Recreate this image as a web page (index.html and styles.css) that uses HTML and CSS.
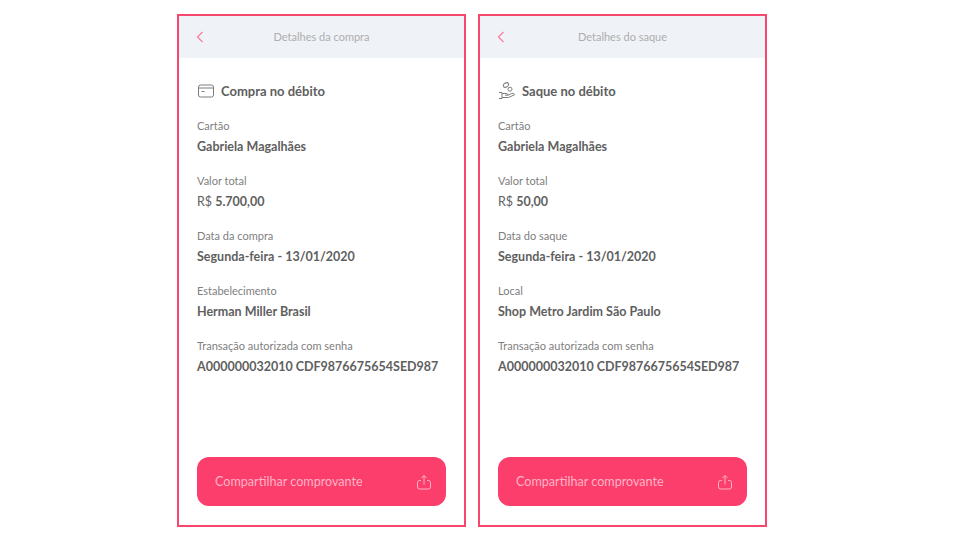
FILE: index.html
```html
<!DOCTYPE html>
<html lang="pt-BR">
<head>
  <meta charset="UTF-8" />
  <title>Detalhes da compra e do saque</title>
  <link rel="stylesheet" href="styles.css">
</head>
<body>
  <div class="screens">
    <section class="phone">
      <header class="top-bar">
        <svg class="back" width="8" height="12" viewBox="0 0 8 12"><path d="M6.5 1 L1.5 6 L6.5 11" /></svg>
        <span class="top-title">Detalhes da compra</span>
      </header>
      <div class="content">
        <div class="kind">
          <svg class="kind-icon" width="18" height="16" viewBox="0 0 18 16">
            <rect x="1.5" y="2" width="15" height="12" rx="2" />
            <path d="M1.5 5 H16.5 M4.5 8.5 H7.5" />
          </svg>
          <span>Compra no débito</span>
        </div>
        <div class="field">
          <div class="label">Cartão</div>
          <div class="value">Gabriela Magalhães</div>
        </div>
        <div class="field">
          <div class="label">Valor total</div>
          <div class="value"><span class="currency">R$</span> 5.700,00</div>
        </div>
        <div class="field">
          <div class="label">Data da compra</div>
          <div class="value">Segunda-feira - 13/01/2020</div>
        </div>
        <div class="field">
          <div class="label">Estabelecimento</div>
          <div class="value">Herman Miller Brasil</div>
        </div>
        <div class="field">
          <div class="label">Transação autorizada com senha</div>
          <div class="value">A000000032010 CDF9876675654SED987</div>
        </div>
      </div>
      <button class="share">
        <span>Compartilhar comprovante</span>
        <svg class="share-icon" width="16" height="16" viewBox="0 0 16 16">
          <path d="M5 6.5 H3.5 Q1.5 6.5 1.5 8.5 V13 Q1.5 15 3.5 15 H12.5 Q14.5 15 14.5 13 V8.5 Q14.5 6.5 12.5 6.5 H11" />
          <path d="M8 10.5 V1.5 M5.5 4 L8 1.5 L10.5 4" />
        </svg>
      </button>
    </section>

    <section class="phone">
      <header class="top-bar">
        <svg class="back" width="8" height="12" viewBox="0 0 8 12"><path d="M6.5 1 L1.5 6 L6.5 11" /></svg>
        <span class="top-title">Detalhes do saque</span>
      </header>
      <div class="content">
        <div class="kind">
          <svg class="kind-icon" width="18" height="18" viewBox="0 0 18 18">
            <ellipse cx="8" cy="3" rx="2.8" ry="2" transform="rotate(-30 8 3)" />
            <circle cx="12" cy="7.2" r="2" />
            <path d="M1 10.5 H4 V16.5 H1 M4 11.5 H8 Q10 11.5 10 13.2 H7 M4 15.5 H10.5 L16.8 12.6 Q15.8 10.6 13.6 11.5 L10 13.2" />
          </svg>
          <span>Saque no débito</span>
        </div>
        <div class="field">
          <div class="label">Cartão</div>
          <div class="value">Gabriela Magalhães</div>
        </div>
        <div class="field">
          <div class="label">Valor total</div>
          <div class="value"><span class="currency">R$</span> 50,00</div>
        </div>
        <div class="field">
          <div class="label">Data do saque</div>
          <div class="value">Segunda-feira - 13/01/2020</div>
        </div>
        <div class="field">
          <div class="label">Local</div>
          <div class="value">Shop Metro Jardim São Paulo</div>
        </div>
        <div class="field">
          <div class="label">Transação autorizada com senha</div>
          <div class="value">A000000032010 CDF9876675654SED987</div>
        </div>
      </div>
      <button class="share">
        <span>Compartilhar comprovante</span>
        <svg class="share-icon" width="16" height="16" viewBox="0 0 16 16">
          <path d="M5 6.5 H3.5 Q1.5 6.5 1.5 8.5 V13 Q1.5 15 3.5 15 H12.5 Q14.5 15 14.5 13 V8.5 Q14.5 6.5 12.5 6.5 H11" />
          <path d="M8 10.5 V1.5 M5.5 4 L8 1.5 L10.5 4" />
        </svg>
      </button>
    </section>
  </div>
</body>
</html>
```

FILE: styles.css
```css
body {
  margin: 0;
  background: #fff;
  font-family: 'Lato', 'Open Sans', sans-serif;
  color: #555;
}
.screens {
  display: flex;
  justify-content: center;
  gap: 12px;
  padding-top: 14px;
  padding-right: 16px;
}
.phone {
  box-sizing: border-box;
  width: 289px;
  height: 513px;
  border: 2px solid #f8476f;
  display: flex;
  flex-direction: column;
}
.top-bar {
  position: relative;
  height: 42px;
  flex: none;
  background: #eff2f6;
  display: flex;
  align-items: center;
  justify-content: center;
  padding-bottom: 2px;
  box-sizing: border-box;
}
.back {
  position: absolute;
  left: 17px;
  top: 15px;
  fill: none;
  stroke: #f77f9b;
  stroke-width: 1.2;
}
.top-title {
  font-size: 11px;
  color: #aeaeae;
}
.content {
  flex: 1;
  padding: 23px 18px 0;
}
.kind {
  display: flex;
  align-items: center;
  gap: 6px;
  height: 20px;
  font-size: 13px;
  font-weight: 700;
  color: #5e5e5e;
  margin-bottom: 18px;
}
.kind-icon {
  fill: none;
  stroke: #7d7d7d;
  stroke-width: 1;
}
.field {
  height: 55px;
}
.label {
  font-size: 11px;
  line-height: 14px;
  color: #808080;
  margin-bottom: 6px;
}
.value {
  font-size: 12.5px;
  line-height: 16px;
  font-weight: 700;
  color: #606060;
}
.currency {
  font-weight: 400;
}
.share {
  flex: none;
  height: 49px;
  margin: 0 18px 19px;
  padding: 0 14px 0 18px;
  border: none;
  border-radius: 12px;
  background: #fb3e6b;
  color: #ffb3c6;
  font-family: inherit;
  font-size: 12.6px;
  display: flex;
  align-items: center;
  justify-content: space-between;
}
.share-icon {
  fill: none;
  stroke: #ffb3c6;
  stroke-width: 1;
}
```
